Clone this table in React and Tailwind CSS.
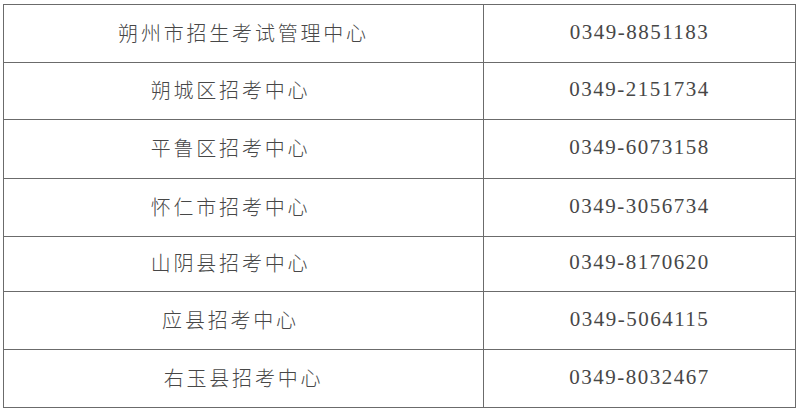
import React from "react";

const rows = [
    { name: "朔州市招生考试管理中心", phone: "0349-8851183", h: "h-[58px]", shift: "pl-0" },
    { name: "朔城区招考中心", phone: "0349-2151734", h: "h-[57px]", shift: "pr-[26px]" },
    { name: "平鲁区招考中心", phone: "0349-6073158", h: "h-[59px]", shift: "pr-[26px]" },
    { name: "怀仁市招考中心", phone: "0349-3056734", h: "h-[58px]", shift: "pr-[26px]" },
    { name: "山阴县招考中心", phone: "0349-8170620", h: "h-[55px]", shift: "pr-[26px]" },
    { name: "应县招考中心", phone: "0349-5064115", h: "h-[58px]", shift: "pr-[26px]" },
    { name: "右玉县招考中心", phone: "0349-8032467", h: "h-[58px]", shift: "pl-0" },
];

const App = () => {
    return (
        <div className="w-[800px] h-[413px] bg-white pl-[3px] pt-[4px]">
            <div className="grid grid-cols-[480px_312px] w-[793px] border-l border-t border-[#6b6b6b]">
                {rows.map((r) => (
                    <React.Fragment key={r.phone}>
                        <div
                            className={`${r.h} ${r.shift} flex items-center justify-center pb-[2px] border-r border-b border-[#6b6b6b] text-[20px] tracking-[2.8px] text-[#474747] font-light`}
                            style={{ fontFamily: '"Noto Sans CJK SC", "Noto Sans", sans-serif' }}
                        >
                            {r.name}
                        </div>
                        <div
                            className={`${r.h} flex items-center justify-center pb-[2px] border-r border-b border-[#6b6b6b] text-[21px] tracking-[1.5px] text-[#474747]`}
                            style={{ fontFamily: '"Liberation Serif", serif' }}
                        >
                            {r.phone}
                        </div>
                    </React.Fragment>
                ))}
            </div>
        </div>
    );
};

export default App;
